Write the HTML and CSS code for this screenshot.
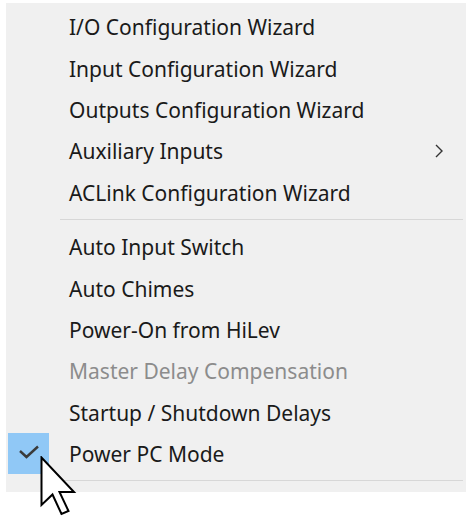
FILE: index.html
```html
<!DOCTYPE html>
<html>
<head>
<meta charset="utf-8">
<link rel="stylesheet" href="styles.css">
</head>
<body>
<div class="menu">
  <div class="item">I/O Configuration Wizard</div>
  <div class="item">Input Configuration Wizard</div>
  <div class="item">Outputs Configuration Wizard</div>
  <div class="item has-sub">Auxiliary Inputs
    <svg class="chev" width="10" height="16" viewBox="0 0 10 16"><polyline points="2,2 8,8 2,14" fill="none" stroke="#333" stroke-width="1.4"/></svg>
  </div>
  <div class="item">ACLink Configuration Wizard</div>
  <div class="sep"></div>
  <div class="item">Auto Input Switch</div>
  <div class="item">Auto Chimes</div>
  <div class="item">Power-On from HiLev</div>
  <div class="item disabled">Master Delay Compensation</div>
  <div class="item">Startup / Shutdown Delays</div>
  <div class="item checked">
    <span class="check"><svg width="41" height="41" viewBox="0 0 41 41"><polyline points="12,18 18.5,24 30,13.5" fill="none" stroke="#3a3a3a" stroke-width="2.4"/></svg></span>
    Power PC Mode
  </div>
  <div class="sep bottom"></div>
</div>
<svg class="cursor" width="40" height="64" viewBox="0 0 40 64">
  <polygon points="1.5,1.5 1.5,49 12.5,38.5 21.5,58 28.5,55 19.5,36 34,36" fill="#fff" stroke="#000" stroke-width="2" stroke-linejoin="miter"/>
</svg>
</body>
</html>
```
FILE: styles.css
```css
html, body {
  margin: 0;
  padding: 0;
  background: #ffffff;
}
body {
  position: relative;
  width: 467px;
  height: 522px;
  overflow: hidden;
  font-family: "Noto Sans", "Open Sans", sans-serif;
}
.menu {
  margin: 3px 0 0 6px;
  width: 460px;
  background: #f0f0f0;
  padding: 3.3px 0 0 0;
  box-sizing: border-box;
  height: 489px;
}
.item {
  position: relative;
  height: 41.4px;
  line-height: 43px;
  padding-left: 63px;
  font-size: 21px;
  color: #1a1a1a;
  white-space: nowrap;
}
.item.disabled {
  color: #8c8c8c;
}
.chev {
  position: absolute;
  left: 428px;
  top: 13px;
}
.check {
  position: absolute;
  left: 2px;
  top: 0;
  width: 41px;
  height: 41px;
  background: #90c8f6;
  display: flex;
  align-items: center;
  justify-content: center;
}
.sep {
  height: 1px;
  background: #d7d7d7;
  margin: 6px 3px 6px 54px;
}
.sep.bottom {
  margin-top: 5.5px;
}
.cursor {
  position: absolute;
  left: 40px;
  top: 456px;
}
```
